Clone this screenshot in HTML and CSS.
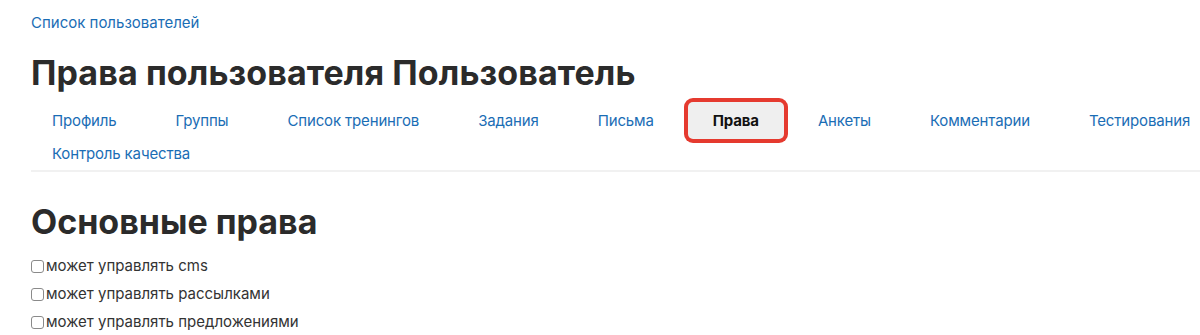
FILE: index.html
```html
<!DOCTYPE html>
<html lang="ru">
<head>
<meta charset="utf-8">
<title>Права пользователя</title>
<link rel="stylesheet" href="styles.css">
</head>
<body>
<div class="page">
  <nav class="breadcrumb"><a href="#">Список пользователей</a></nav>
  <h1 class="title">Права пользователя Пользователь</h1>
  <ul class="tabs">
    <li><a class="tab" href="#">Профиль</a></li>
    <li><a class="tab" href="#">Группы</a></li>
    <li><a class="tab" href="#">Список тренингов</a></li>
    <li><a class="tab" href="#">Задания</a></li>
    <li><a class="tab" href="#">Письма</a></li>
    <li><a class="tab active" href="#">Права</a></li>
    <li><a class="tab" href="#">Анкеты</a></li>
    <li><a class="tab" href="#">Комментарии</a></li>
    <li><a class="tab" href="#">Тестирования</a></li>
    <li><a class="tab" href="#">Контроль качества</a></li>
  </ul>
  <h2 class="section">Основные права</h2>
  <form class="perms">
    <label class="perm"><input type="checkbox">может управлять cms</label>
    <label class="perm"><input type="checkbox">может управлять рассылками</label>
    <label class="perm"><input type="checkbox">может управлять предложениями</label>
  </form>
</div>
</body>
</html>
```
FILE: styles.css
```css
html, body {
  margin: 0;
  padding: 0;
  background: #fff;
}
body {
  font-family: Inter, "Noto Sans", "DejaVu Sans", sans-serif;
  color: #2b2b2b;
  font-size: 15px;
}
a {
  color: #1a6db5;
  text-decoration: none;
}
.page {
  padding: 13px 0 0 31px;
}
.breadcrumb {
  line-height: 20px;
}
.title {
  margin: 20px 0 0;
  font-size: 34px;
  line-height: 40px;
  font-weight: 700;
  color: #2b2b2b;
  letter-spacing: 0.1px;
}
.tabs {
  list-style: none;
  margin: 11px 0 0;
  padding: 0 0 0 21px;
  display: flex;
  flex-wrap: wrap;
  column-gap: 59px;
  border-bottom: 2px solid #f1f1f1;
}
.tab {
  display: block;
  line-height: 21px;
  padding: 6px 0;
  letter-spacing: -0.15px;
}
.tab.active {
  color: #111;
  font-weight: 700;
  background: #efefef;
  padding: 8px 25px;
  margin: -2px -25px;
  border-radius: 5px;
  box-shadow: 0 0 0 4px #e53a2f;
}
.section {
  margin: 30px 0 0;
  font-size: 34px;
  line-height: 40px;
  font-weight: 700;
  color: #2b2b2b;
}
.perms {
  margin-top: 10px;
  display: flex;
  flex-direction: column;
}
.perm {
  display: flex;
  align-items: center;
  line-height: 28px;
  color: #333;
}
.perm input {
  appearance: none;
  -webkit-appearance: none;
  flex: none;
  box-sizing: border-box;
  width: 13px;
  height: 13px;
  margin: 0 2px 0 0;
  border: 1px solid #8a8a8a;
  border-radius: 3px;
  background: #fff;
}
```
